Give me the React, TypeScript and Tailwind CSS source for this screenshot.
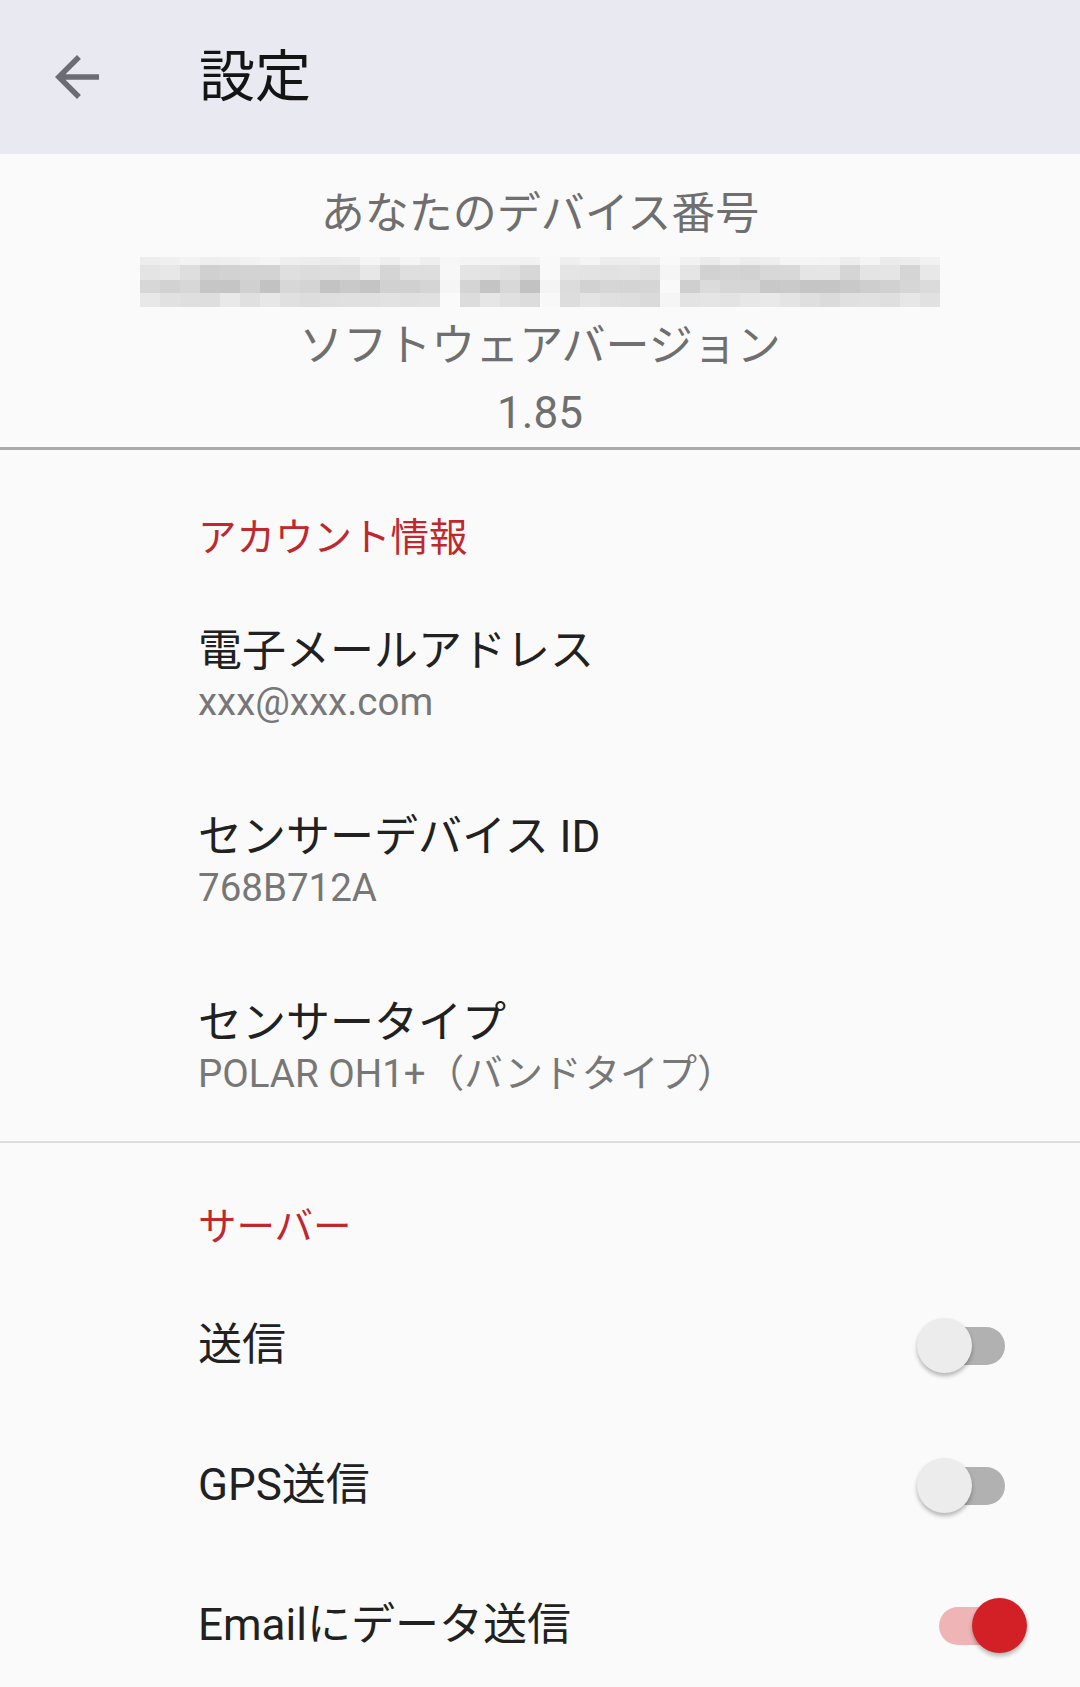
import React from "react";

function hash(n: number): number {
  const x = Math.sin(n * 12.9898 + 78.233) * 43758.5453;
  return x - Math.floor(x);
}

const ROWS = [8, 15, 13, 14];
const ROW_BASE = [240, 220, 206, 226];
const ROW_VAR = [10, 24, 28, 16];
const GAP_COLS = [15, 20, 26];

function Mosaic() {
  const cols = 40;
  return (
    <div className="mx-auto flex w-[800px] flex-col">
      {ROWS.map((h, r) => (
        <div key={r} className="flex">
          {Array.from({ length: cols }).map((_, c) => {
            let v = ROW_BASE[r] + Math.round((hash(r * 97 + c * 13) - 0.5) * ROW_VAR[r]);
            if (GAP_COLS.includes(c)) v = 244 + Math.round(hash(c + r) * 6);
            if (v > 250) v = 250;
            return (
              <div
                key={c}
                className="w-[20px]"
                style={{ height: h, backgroundColor: `rgb(${v},${v},${v})` }}
              />
            );
          })}
        </div>
      ))}
    </div>
  );
}

function Switch({ on }: { on: boolean }) {
  return (
    <div className="relative h-[55px] w-[110px] shrink-0">
      <div
        className={
          on
            ? "absolute left-[22px] top-[9px] h-[38px] w-[66px] rounded-full bg-[#efb4b6]"
            : "absolute left-[22px] top-[9px] h-[38px] w-[66px] rounded-full bg-[#b1b1b1]"
        }
      />
      <div
        className={
          on
            ? "absolute left-[55px] top-0 h-[55px] w-[55px] rounded-full bg-[#d32027] shadow-[0_3px_4px_rgba(0,0,0,0.28)]"
            : "absolute left-0 top-0 h-[55px] w-[55px] rounded-full bg-[#ececec] shadow-[0_3px_4px_rgba(0,0,0,0.28)]"
        }
      />
    </div>
  );
}

function InfoItem({ title, summary }: { title: string; summary: string }) {
  return (
    <div className="flex flex-col pb-[43px] pl-[198px] pt-[41px]">
      <div className="text-[44px] leading-[56px] text-[#212121]">{title}</div>
      <div className="text-[38.5px] leading-[46px] text-[#777777]">{summary}</div>
    </div>
  );
}

function SwitchItem({ title, on }: { title: string; on: boolean }) {
  return (
    <div className="flex h-[140px] items-center justify-between pl-[198px] pr-[53px]">
      <div className="text-[44px] leading-[56px] text-[#212121]">{title}</div>
      <Switch on={on} />
    </div>
  );
}

export default function App() {
  return (
    <div className="min-h-[1687px] w-[1080px] bg-[#fafafa] font-['Roboto','Noto_Sans_CJK_JP',sans-serif]">
      {/* App bar */}
      <div className="flex h-[154px] items-center bg-[#e9e9f2]">
        <div className="ml-[44px] flex h-[66px] w-[66px] items-center justify-center">
          <svg viewBox="0 0 24 24" className="h-[66px] w-[66px]" fill="#6c6c74">
            <path d="M20 11H7.83l5.59-5.59L12 4l-8 8 8 8 1.41-1.41L7.83 13H20v-2z" />
          </svg>
        </div>
        <div className="ml-[89px] text-[56px] font-normal leading-none text-[#141414]">設定</div>
      </div>

      {/* Device info */}
      <div className="flex flex-col items-center pt-[27px] text-[44px] text-[#6f6f6f]">
        <div className="leading-[66px]">あなたのデバイス番号</div>
        <div className="mt-[10px]">
          <Mosaic />
        </div>
        <div className="mt-[6px] leading-[66px]">ソフトウェアバージョン</div>
        <div className="mt-[1px] leading-[66px]">1.85</div>
      </div>
      <div className="mt-[1px] h-[3px] bg-[#ababab]" />

      {/* Account section */}
      <div className="pl-[198px] pt-[63px] text-[38.5px] leading-[50px] text-[#c0282d]">アカウント情報</div>
      <div className="mt-[19px]">
        <InfoItem title="電子メールアドレス" summary="xxx@xxx.com" />
        <InfoItem title="センサーデバイス ID" summary="768B712A" />
        <InfoItem title="センサータイプ" summary="POLAR OH1+（バンドタイプ）" />
      </div>
      <div className="mt-[1px] h-[2px] bg-[#dcdcdc]" />

      {/* Server section */}
      <div className="pl-[198px] pt-[59px] text-[38.5px] leading-[50px] text-[#c0282d]">サーバー</div>
      <div className="mt-[23px]">
        <SwitchItem title="送信" on={false} />
        <SwitchItem title="GPS送信" on={false} />
        <SwitchItem title="Emailにデータ送信" on={true} />
      </div>
    </div>
  );
}
